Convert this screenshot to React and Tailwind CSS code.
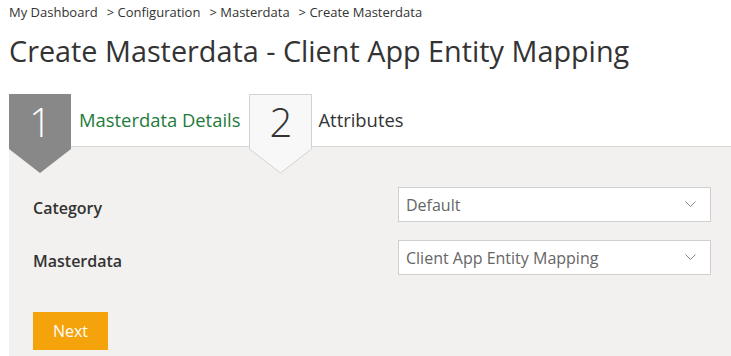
import React from 'react';

const font = { fontFamily: '"Open Sans", "Noto Sans", sans-serif' };

function Step({ num, active }) {
  return (
    <div className="relative w-[63px] h-[52px] shrink-0">
      <svg
        className="absolute left-0 top-0 z-10"
        width="63"
        height="80"
        viewBox="0 0 63 80"
      >
        {active ? (
          <polygon points="0,0 62,0 62,55 31,79 0,55" fill="#888888" />
        ) : (
          <polygon
            points="0.5,0.5 62.5,0.5 62.5,55 31.5,79 0.5,55"
            fill="#f8f8f8"
            stroke="#d2d2d2"
            strokeWidth="1"
          />
        )}
      </svg>
      <span
        className={`absolute inset-x-0 top-[4px] z-20 text-center text-[40px] font-light leading-[48px] ${
          active ? 'text-white' : 'text-[#333]'
        }`}
      >
        {num}
      </span>
    </div>
  );
}

function Select({ value }) {
  return (
    <div className="flex h-[35px] w-[313px] items-center justify-between border border-[#cfcfcf] bg-white pl-[7px] pr-[14px]">
      <span className="text-[16px] text-[#666]">{value}</span>
      <svg width="11" height="7" viewBox="0 0 11 7">
        <polyline points="0.5,0.5 5.5,5.5 10.5,0.5" fill="none" stroke="#888" strokeWidth="1" />
      </svg>
    </div>
  );
}

export default function App() {
  return (
    <div className="h-[356px] w-[731px] overflow-hidden bg-white pl-[9px]" style={font}>
      <div className="pt-[3px] text-[13px] leading-[18px] text-[#333]">
        <span>My Dashboard</span>
        <span className="ml-[9px]">&gt; Configuration</span>
        <span className="ml-[9px]">&gt; Masterdata</span>
        <span className="ml-[9px]">&gt; Create Masterdata</span>
      </div>
      <h1 className="mt-[12px] text-[28.8px] leading-[36px] text-[#333]">
        Create Masterdata - Client App Entity Mapping
      </h1>
      <div className="mt-[25px] flex items-center">
        <Step num="1" active />
        <span className="ml-[7px] mr-[9px] text-[18.4px] text-[#1e7b3a]">Masterdata Details</span>
        <Step num="2" />
        <span className="ml-[6px] text-[18.4px] text-[#333]">Attributes</span>
      </div>
      <div className="h-[220px] border-t border-[#d8d8d8] bg-[#f2f1ef] pl-[24px] pr-[20px] pt-[40px]">
        <div className="flex flex-col gap-[18px]">
          <div className="flex items-center justify-between">
            <span className="pt-[6px] text-[16px] font-semibold text-[#333]">Category</span>
            <Select value="Default" />
          </div>
          <div className="flex items-center justify-between">
            <span className="pt-[6px] text-[16px] font-semibold text-[#333]">Masterdata</span>
            <Select value="Client App Entity Mapping" />
          </div>
        </div>
        <button className="mt-[37px] h-[38px] w-[75px] bg-[#f4a30a] text-[16px] text-white">
          Next
        </button>
      </div>
    </div>
  );
}
